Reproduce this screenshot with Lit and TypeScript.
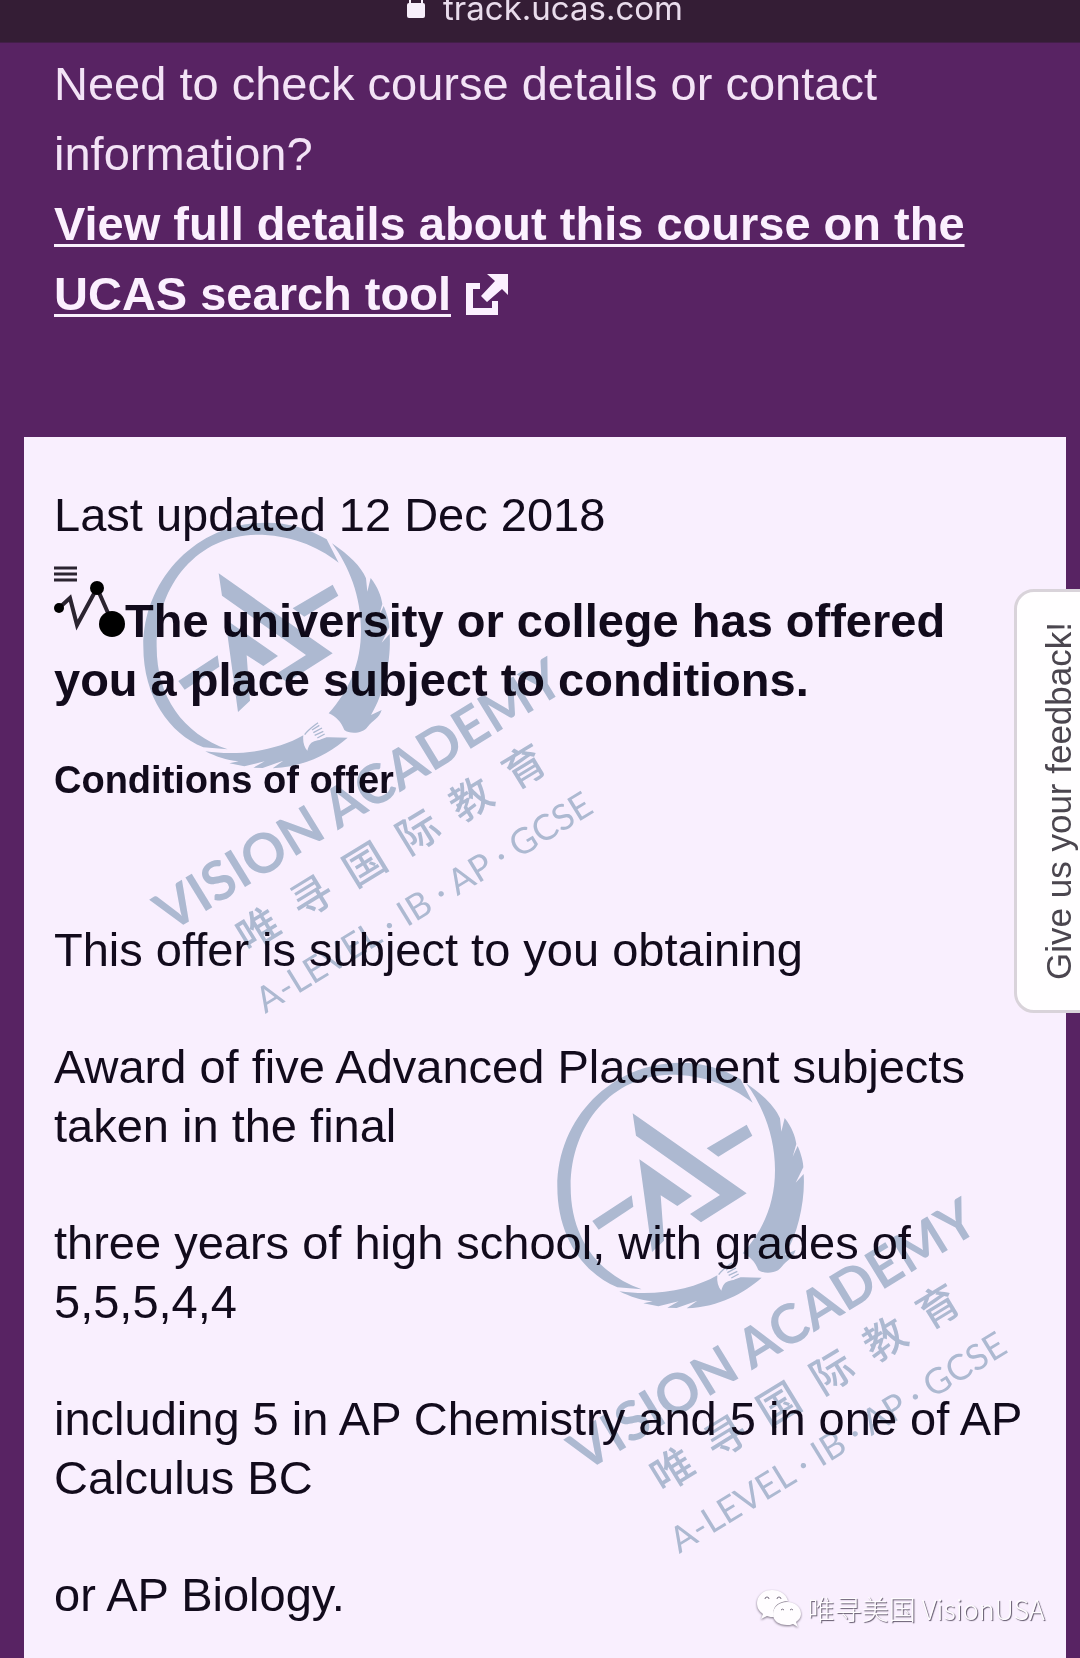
import { LitElement, html, css, svg } from "lit";
import { customElement } from "lit/decorators.js";

@customElement("academy-mark")
class AcademyMark extends LitElement {
  static styles = css`
    :host {
      display: block;
      pointer-events: none;
      mix-blend-mode: multiply;
    }
    .mark {
      display: block;
      width: 520px;
      height: 520px;
      fill: #b1c6d2;
      overflow: visible;
    }
    .name {
      font: 700 163px Lato, "Liberation Sans", sans-serif;
    }
    .chinese {
      font: 500 126px "Noto Sans CJK SC", sans-serif;
      text-anchor: middle;
    }
    .exams {
      font: 400 107px Lato, "Liberation Sans", sans-serif;
    }
    .feather {
      fill: none;
      stroke: #b1c6d2;
      stroke-width: 4;
    }
  `;

  render() {
    return html`
      <svg class="mark" viewBox="0 0 1560 1560" aria-hidden="true">
        ${svg`
          <path d="M668 188 L632 118 C580 86 515 68 452 68 C245 68 82 235 82 440 C82 590 160 700 262 742 L335 748 C200 700 122 590 122 440 C122 250 250 106 420 104 C520 104 600 135 668 188Z"/>
          <path d="M648 130 C700 165 735 200 750 235 L754 275 L764 234 C785 260 796 290 799 312 L788 350 L803 318 C815 345 820 370 820 382 L797 428 L821 402 C826 480 805 580 765 645 L797 630 C790 655 770 660 755 680 C740 702 700 702 685 690 C675 665 660 650 638 640 C700 570 735 490 735 390 C735 290 700 200 648 130Z"/>
          <path d="M268 754 C380 770 490 748 562 706 C560 725 564 740 574 752 C578 735 585 725 600 722 C618 720 625 710 640 712 L695 713 C640 760 570 800 470 805 L502 782 L440 804 L412 803 L446 784 L385 799 L340 790 L368 784 C330 780 300 770 268 754Z"/>
          <path class="feather" d="M566 704 C575 690 590 680 606 668 M588 690 L610 676 M592 698 L618 684 M596 706 L622 694 M604 714 L626 702"/>
          <path d="M308 220 L650 460 L513 547 L480 522 L570 465 L318 287Z"/>
          <path d="M328 358 L486 468 L442 498 L392 466 L402 602 L366 636Z"/>
          <path d="M530 325 L650 254 L667 287 L565 350Z"/>
          <path d="M187 543 L305 466 L310 500 L206 569Z"/>
          <text class="name" transform="translate(162 1299) rotate(-31.5)">VISION ACADEMY</text>
          <text class="chinese" transform="translate(427 1288) rotate(-31.5)" x="0 187 374 561 748 935" y="46">唯寻国际教育</text>
          <text class="exams" transform="translate(448 1542) rotate(-31.5)">A-LEVEL · IB · AP · GCSE</text>
        `}
      </svg>
    `;
  }
}

@customElement("app-root")
class AppRoot extends LitElement {
  static styles = css`
    :host {
      display: block;
      font-family: "Liberation Sans", Arial, sans-serif;
      font-size: 47px;
      line-height: 59px;
      color: #120b1c;
    }
    .page {
      position: relative;
      display: flex;
      flex-direction: column;
      min-height: 100vh;
      background: #582363;
      overflow: hidden;
    }
    .address {
      display: flex;
      justify-content: center;
      align-items: flex-end;
      gap: 18px;
      height: 43px;
      box-sizing: border-box;
      padding: 0 0 22px 10px;
      background: #341d35;
      border-bottom: 1px solid #421f48;
      color: #e9dcec;
      font-family: Inter, sans-serif;
      font-size: 33px;
      line-height: 24px;
    }
    .lock {
      display: block;
      width: 18px;
      height: 28px;
      fill: #f6eefa;
    }
    .intro {
      padding: 6px 54px 0;
      height: 388px;
      color: #f3e3f6;
      line-height: 70px;
    }
    p,
    h1,
    h2 {
      margin: 0;
    }
    .details {
      color: #fbf0fe;
      font-weight: 700;
      text-decoration: underline;
      text-decoration-thickness: 3px;
      text-underline-offset: 4px;
      text-decoration-skip-ink: none;
    }
    .external {
      width: 42px;
      height: 42px;
      margin: 0 0 -6px 2px;
      vertical-align: baseline;
      fill: #fbf0fe;
    }
    .card {
      flex: 1;
      margin: 0 14px 0 24px;
      padding: 48px 30px 28px;
      background: #f9effe;
    }
    .offer {
      margin-top: 47px;
      font-size: 47px;
      font-weight: 700;
    }
    .status {
      width: 71px;
      height: 74px;
      margin: -40px 0 -1px;
      vertical-align: baseline;
    }
    .conditions {
      margin: 47px 0 116px;
      font-size: 38px;
      line-height: 48px;
    }
    .terms {
      display: flex;
      flex-direction: column;
      gap: 58px;
    }
    .mark-top,
    .mark-bottom {
      position: absolute;
      left: 116px;
      top: 500px;
    }
    .mark-bottom {
      left: 530px;
      top: 1040px;
    }
    .feedback {
      position: absolute;
      right: -4px;
      top: 589px;
      height: 424px;
      width: 70px;
      box-sizing: border-box;
      padding: 0 0 0 20px;
      border: 3px solid #d9d3da;
      border-radius: 20px 0 0 20px;
      background: #fffeff;
      color: #4b464f;
      font: 35px "Liberation Sans", Arial, sans-serif;
      display: flex;
      align-items: center;
      justify-content: center;
    }
    .feedback-label {
      writing-mode: vertical-rl;
      transform: rotate(180deg);
      white-space: nowrap;
      line-height: 40px;
    }
    .account {
      position: absolute;
      right: 35px;
      bottom: 28px;
      display: flex;
      align-items: center;
      gap: 6px;
      color: #fffdff;
      font: 300 27px/40px "Noto Sans CJK SC", sans-serif;
      text-shadow: 1px 1px 1px #5c5266;
    }
    .wechat {
      display: block;
      width: 46px;
      height: 42px;
      fill: #fffdff;
      filter: drop-shadow(0 1px 1px #786f80);
    }
  `;

  private terms = [
    "This offer is subject to you obtaining",
    "Award of five Advanced Placement subjects taken in the final",
    "three years of high school, with grades of 5,5,5,4,4",
    "including 5 in AP Chemistry and 5 in one of AP Calculus BC",
    "or AP Biology.",
  ];

  render() {
    return html`
      <div class="page">
        <header class="address">
          <svg class="lock" viewBox="0 0 18 28" aria-hidden="true">
            <rect x="0" y="11" width="18" height="15" rx="2" />
            <path d="M3 12V7a6 6 0 0 1 12 0v5" fill="none" stroke="#f6eefa" stroke-width="2" />
          </svg>
          <span>track.ucas.com</span>
        </header>

        <section class="intro">
          <p>Need to check course details or contact information?</p>
          <p>
            <a class="details" href="#course">View full details about this course on the UCAS search tool</a>
            <svg class="external" viewBox="0 0 42 42" aria-hidden="true">
              <path d="M21 0H42V21L36 15L21 28L15 22L29 7Z" />
              <path d="M0 9H14V15H7V34H26V27H32V41H0Z" />
            </svg>
          </p>
        </section>

        <main class="card">
          <p>Last updated 12 Dec 2018</p>
          <h1 class="offer"><svg class="status" viewBox="0 0 71 74" aria-hidden="true">
              <path d="M0 4H23M0 10H23M0 16H23" stroke="#2b2430" stroke-width="3" />
              <path d="M5 44L16 34L23 61L43 24L58 58" fill="none" stroke="#2b2430" stroke-width="4" />
              <circle cx="5" cy="44" r="5" />
              <circle cx="43" cy="24" r="7" />
              <circle cx="58" cy="60" r="13" />
            </svg>The university or college has offered you a place subject to conditions.</h1>
          <h2 class="conditions">Conditions of offer</h2>
          <div class="terms">${this.terms.map((term) => html`<p>${term}</p>`)}</div>
        </main>

        <academy-mark class="mark-top"></academy-mark>
        <academy-mark class="mark-bottom"></academy-mark>

        <button class="feedback" type="button">
          <span class="feedback-label">Give us your feedback!</span>
        </button>

        <div class="account">
          <svg class="wechat" viewBox="0 0 46 42" aria-hidden="true">
            <path d="M16 2C7 2 1 8 1 15c0 5 2 8 6 11l-2 5 6-3c2 1 5 1 7 1C15 20 22 13 32 13 30 6 24 2 16 2Z" />
            <path d="M31 14c-8 0-14 5-14 12s6 11 14 11c2 0 4 0 6-1l5 3-2-5c3-2 5-5 5-8 0-7-6-12-14-12Z" />
            <path d="M9 11a2 2 0 0 1 4 0M21 11a2 2 0 0 1 4 0M25 22a2 2 0 0 1 3 0M34 22a2 2 0 0 1 3 0" fill="none" stroke="#786f80" stroke-width="1" />
          </svg>
          <span>唯寻美国 VisionUSA</span>
        </div>
      </div>
    `;
  }
}
